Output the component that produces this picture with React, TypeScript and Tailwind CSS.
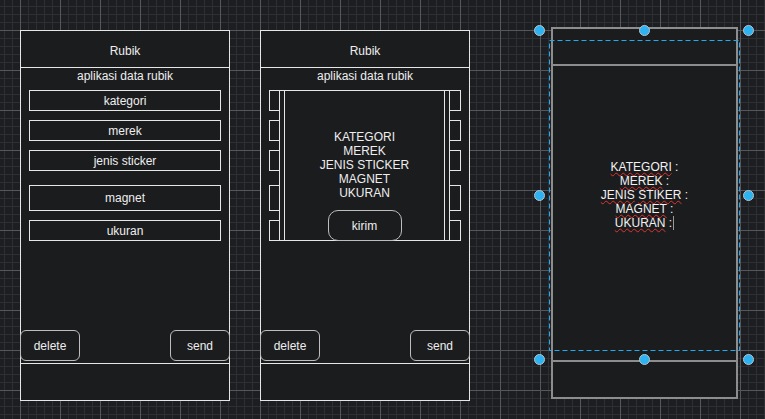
import React from "react";

function Field({ label, className }: { label?: string; className: string }) {
  return (
    <div
      className={
        "mx-2 flex items-center justify-center border border-[#e6e6e6] leading-none " +
        className
      }
    >
      {label}
    </div>
  );
}

function Phone({ overlay }: { overlay?: boolean }) {
  const l = (s: string) => (overlay ? undefined : s);
  return (
    <div className="mt-[3px] flex h-[371px] w-[210px] shrink-0 flex-col border border-[#e6e6e6] bg-[#1b1c1e]">
      <div className="flex h-[37px] shrink-0 items-center justify-center border-b border-[#e6e6e6] pt-[3px]">
        Rubik
      </div>
      <div className="relative flex flex-1 flex-col">
        <div className="text-center leading-[16px]">aplikasi data rubik</div>
        <Field label={l("kategori")} className="mt-[6px] h-[21px]" />
        <Field label={l("merek")} className="mt-[9px] h-[21px]" />
        <Field label={l("jenis sticker")} className="mt-[9px] h-[21px]" />
        <Field label={l("magnet")} className="mt-[14px] h-[26px]" />
        <Field label={l("ukuran")} className="mt-[9px] h-[21px]" />
        <div className="-mx-px mb-[2px] mt-auto flex justify-between">
          <div className="flex h-[31px] w-[60px] items-center justify-center rounded-[6px] border border-[#bdbdbd]">
            delete
          </div>
          <div className="flex h-[31px] w-[60px] items-center justify-center rounded-[6px] border border-[#bdbdbd]">
            send
          </div>
        </div>
        {overlay && (
          <div className="absolute left-[18px] top-[22px] h-[151px] w-[171px] border border-[#e6e6e6] bg-[#1b1c1e]">
            <div className="mx-[4px] flex h-full flex-col items-center border-x border-[#e6e6e6] pt-[39px]">
              <div className="text-center leading-[14px]">
                <div>KATEGORI</div>
                <div>MEREK</div>
                <div>JENIS STICKER</div>
                <div>MAGNET</div>
                <div>UKURAN</div>
              </div>
              <div className="mt-[10px] flex h-[31px] w-[74px] shrink-0 items-center justify-center rounded-[10px] border border-[#bdbdbd]">
                kirim
              </div>
            </div>
          </div>
        )}
      </div>
      <div className="h-[37px] shrink-0 border-t border-[#e6e6e6]" />
    </div>
  );
}

function Sq({ children }: { children: React.ReactNode }) {
  return (
    <span className="underline decoration-[#e0342f] decoration-wavy decoration-1 underline-offset-[1px]">
      {children}
    </span>
  );
}

function Handle({ className }: { className: string }) {
  return (
    <div
      className={
        "absolute h-[11px] w-[11px] rounded-full border border-[#b9c3c9] bg-[#2db3f2] " + className
      }
    />
  );
}

export default function App() {
  return (
    <div className="relative h-[419px] w-[765px] overflow-hidden bg-[#1d1e21] bg-[image:linear-gradient(to_right,#56575a_1px,transparent_1px),linear-gradient(to_bottom,#56575a_1px,transparent_1px),linear-gradient(to_right,#2e2f33_1px,transparent_1px),linear-gradient(to_bottom,#2e2f33_1px,transparent_1px)] bg-[size:40px_40px,40px_40px,8px_8px,8px_8px] bg-[position:20px_30px] font-['Liberation_Sans',Arial,sans-serif] text-[12px] text-[#eeeeee]">
      <div className="flex items-start pl-[20px] pt-[27px]">
        <Phone />
        <div className="ml-[30px]">
          <Phone overlay />
        </div>
        <div className="ml-[81px] flex h-[372px] w-[187px] shrink-0 flex-col border-2 border-[#8d8d8d] bg-[#1b1c1e]">
          <div className="h-[37px] shrink-0 border-b-2 border-[#8d8d8d]" />
          <div className="flex flex-1 flex-col items-center pt-[94px] text-center leading-[14px] text-[#f2f2f2]">
            <div>
              <Sq>KATEGORI</Sq> :
            </div>
            <div>
              <Sq>MEREK</Sq> :
            </div>
            <div>
              <Sq>JENIS</Sq> <Sq>STIKER</Sq> :
            </div>
            <div>
              <Sq>MAGNET</Sq> :
            </div>
            <div className="flex items-center justify-center">
              <span>
                <Sq>UKURAN</Sq> :
              </span>
              <span className="ml-[1px] inline-block h-[14px] w-px bg-[#9a9a9a]" />
            </div>
          </div>
          <div className="h-[37px] shrink-0 border-t-2 border-[#8d8d8d]" />
        </div>
      </div>

      <svg
        className="pointer-events-none absolute left-[549px] top-[40px]"
        width="191"
        height="311"
        viewBox="0 0 191 311"
      >
        <rect
          x="0.5"
          y="0.5"
          width="190"
          height="310"
          fill="none"
          stroke="#22aaf0"
          strokeWidth="1"
          strokeDasharray="5 3"
        />
      </svg>

      <Handle className="left-[534px] top-[25px]" />
      <Handle className="left-[639px] top-[25px]" />
      <Handle className="left-[743px] top-[25px]" />
      <Handle className="left-[534px] top-[190px]" />
      <Handle className="left-[743px] top-[190px]" />
      <Handle className="left-[534px] top-[354px]" />
      <Handle className="left-[639px] top-[354px]" />
      <Handle className="left-[743px] top-[354px]" />
    </div>
  );
}
